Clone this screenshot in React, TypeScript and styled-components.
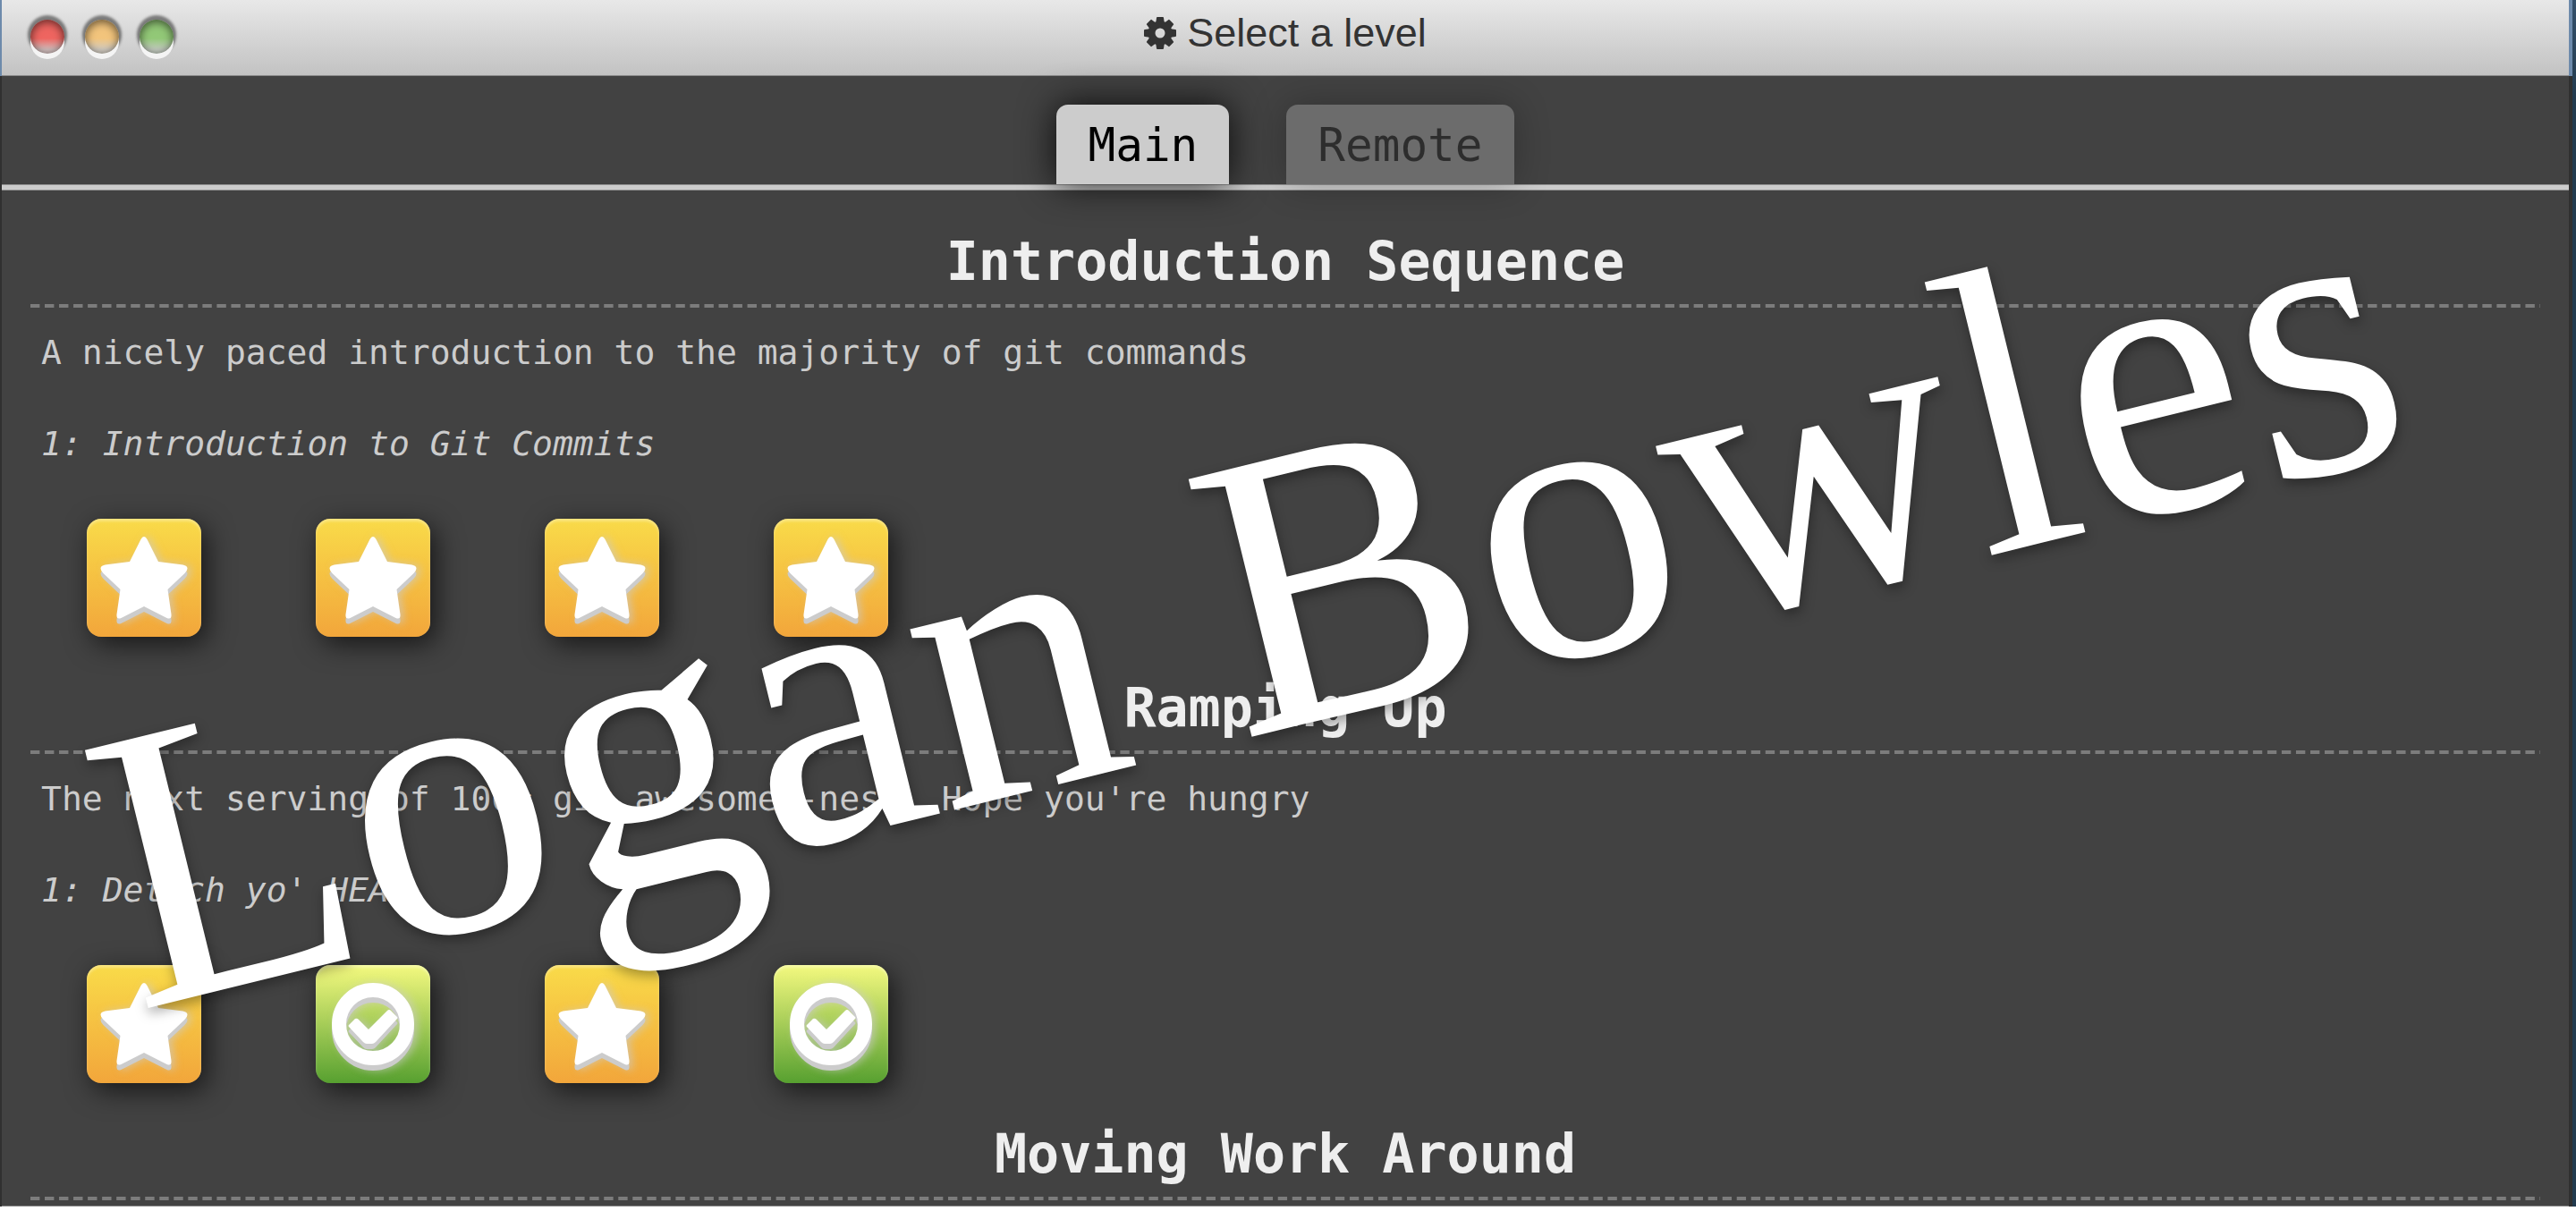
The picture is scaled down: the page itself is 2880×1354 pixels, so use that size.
import React from "react";
import styled, { createGlobalStyle, css } from "styled-components";

const Global = createGlobalStyle`
  *, *::before, *::after { box-sizing: border-box; }
  html { background: #fff; }
  body { margin: 0; overflow: hidden; }
`;

const mono = css`
  font-family: "DejaVu Sans Mono", "Liberation Mono", monospace;
`;

const Desktop = styled.div`
  position: relative;
  padding-right: 4px;
  background: linear-gradient(#34506b, #223a4e 110px, #223a4e);
  overflow: hidden;
`;

const TitleBar = styled.header`
  display: grid;
  grid-template-columns: 1fr auto 1fr;
  align-items: start;
  height: 85px;
  border: solid #6d8aab;
  border-width: 0 4px 0 2px;
  background: linear-gradient(#e8e8e8, #c2c2c2) padding-box;
  box-shadow: inset 0 -1px 0 #8c8c8c;
`;

const Lights = styled.div`
  display: flex;
  gap: 23px;
  padding: 22px 32px 0;
`;

const Light = styled.button<{ $color: string }>`
  width: 38px;
  height: 38px;
  padding: 0;
  border: 0;
  border-radius: 50%;
  background: linear-gradient(transparent 55%, rgba(205, 205, 205, 0.85) 88%), ${(p) => p.$color};
  box-shadow:
    inset 0 2px 10px 1px rgba(0, 0, 0, 0.55),
    0 6px 0 #f4f4f4,
    0 -2px 3px 3px rgba(0, 0, 0, 0.45);
`;

const Title = styled.h1`
  display: flex;
  align-items: center;
  gap: 12px;
  margin: 0;
  font: 400 45px/74px "Liberation Sans", Arial, sans-serif;
  color: #333;
`;

const Body = styled.main`
  ${mono}
  border: solid #303030;
  border-width: 0 4px 0 2px;
  background: #424242 padding-box;
  box-shadow: inset 0 -1px 0 #8c8c8c;
`;

const Tabs = styled.nav`
  display: flex;
  justify-content: center;
  gap: 64px;
  padding-top: 32px;
`;

const Tab = styled.button<{ $active?: boolean }>`
  ${mono}
  position: relative;
  padding: 16px 35px 13px;
  border: 0;
  border-radius: 13px 13px 0 0;
  background: #ccc;
  color: #000;
  font-size: 51px;
  line-height: 60px;
  opacity: ${(p) => (p.$active ? 1 : 0.3)};
  box-shadow: 0 0 40px rgba(0, 0, 0, 0.85);
`;

const Rule = styled.div`
  height: 7px;
  border: solid #939393;
  border-width: 1px 0;
  background: #ccc;
`;

const Levels = styled.div`
  padding: 39px 32px 7px;
`;

const Heading = styled.h2`
  margin: 0;
  padding-bottom: 12px;
  text-align: center;
  font-size: 60px;
  line-height: 80px;
  color: #eee;
  background: linear-gradient(90deg, #7c7c7c 10px, transparent 10px) 0 100% / 16px 4px;
  background-repeat: round no-repeat;
`;

const About = styled.p`
  margin: 20px 0 0 12px;
  font-size: 38px;
  line-height: 60px;
  color: #ccc;
`;

const SeriesName = styled.h3`
  margin: 42px 0 0 12px;
  font-size: 38px;
  font-weight: 400;
  font-style: italic;
  line-height: 60px;
  color: #ccc;
`;

const Tiles = styled.div`
  display: flex;
  gap: 128px;
  padding: 54px 63px 39px;
`;

const Tile = styled.button<{ $solved?: boolean }>`
  display: grid;
  place-items: center;
  width: 128px;
  height: 132px;
  padding: 0;
  border: 0;
  border-radius: 16px;
  background: ${(p) =>
    p.$solved ? "linear-gradient(#f4f97f, #57a030)" : "linear-gradient(#f9db49, #f2a63b)"};
  box-shadow:
    inset 0 3px 3px rgba(255, 255, 255, 0.3),
    6px 8px 30px rgba(0, 0, 0, 0.65);

  svg {
    display: block;
    overflow: visible;
    filter: drop-shadow(0 6px 0 #ccc) drop-shadow(4px 0 4px rgba(204, 204, 204, 0.6));
  }
`;

const Signature = styled.div`
  position: absolute;
  top: 751px;
  left: 153px;
  transform: rotate(-13.8deg);
  transform-origin: 0 379px;
  font: 400 453px/453px "Liberation Serif", "Times New Roman", serif;
  white-space: nowrap;
  color: #fff;
  text-shadow: 0 6px 14px rgba(0, 0, 0, 0.35);
  pointer-events: none;
`;

const Gear = () => (
  <svg width="36" height="36" viewBox="-18 -18 36 36" fill="#333" aria-hidden="true">
    {[0, 45, 90, 135, 180, 225, 270, 315].map((a) => (
      <path key={a} transform={`rotate(${a})`} d="M-5 -10L-4 -17Q-4 -18 -3 -18H3Q4 -18 4 -17L5 -10Z" />
    ))}
    <circle r="9.5" fill="none" stroke="#333" strokeWidth="8" />
  </svg>
);

const Star = () => (
  <svg width="98" height="92" viewBox="0 0 97 92" fill="#fff" aria-hidden="true">
    <path d="M48.5 0Q50.5 0 52 3L64.5 28L92 31.5Q97 32.5 97 35.5Q97 38 94 41L75 59L79 87Q79.500 93 74 91L48.500 78L23 91Q17.500 93 18 87L22 59L3 41Q0 38 0 35.500Q0 32.500 5 31.500L32.500 28L45 3Q46.500 0 48.500 0Z" />
  </svg>
);

const Check = () => (
  <svg width="92" height="92" viewBox="-46 -46 92 92" aria-hidden="true">
    <circle r="38" fill="none" stroke="#fff" strokeWidth="16" />
    <path
      d="M-27 3Q-28 2 -27 1L-20 -6Q-18 -7 -16 -5L-5 6L16 -15Q18 -17 20 -15L27 -8Q28 -7 27 -6L3 20Q1 22 -1 22H-7Q-9 22 -11 20Z"
      fill="#fff"
    />
  </svg>
);

type Group = { title: string; about?: string; series?: string; solved?: boolean[] };

const groups: Group[] = [
  {
    title: "Introduction Sequence",
    about: "A nicely paced introduction to the majority of git commands",
    series: "1: Introduction to Git Commits",
    solved: [false, false, false, false],
  },
  {
    title: "Ramping Up",
    about: "The next serving of 100% git awesomes-ness. Hope you're hungry",
    series: "1: Detach yo' HEAD",
    solved: [false, true, false, true],
  },
  { title: "Moving Work Around" },
];

export default function App() {
  return (
    <Desktop>
      <Global />
      <TitleBar>
        <Lights>
          <Light $color="#ee6560" aria-label="Close" />
          <Light $color="#f2c47c" aria-label="Minimize" />
          <Light $color="#92c877" aria-label="Zoom" />
        </Lights>
        <Title>
          <Gear />
          Select a level
        </Title>
      </TitleBar>
      <Body>
        <Tabs>
          <Tab $active>Main</Tab>
          <Tab>Remote</Tab>
        </Tabs>
        <Rule />
        <Levels>
          {groups.map((g) => (
            <section key={g.title}>
              <Heading>{g.title}</Heading>
              {g.about && <About>{g.about}</About>}
              {g.series && <SeriesName>{g.series}</SeriesName>}
              {g.solved && (
                <Tiles>
                  {g.solved.map((done, i) => (
                    <Tile key={i} $solved={done} aria-label={`Level ${i + 1}`}>
                      {done ? <Check /> : <Star />}
                    </Tile>
                  ))}
                </Tiles>
              )}
            </section>
          ))}
        </Levels>
      </Body>
      <Signature>Logan Bowles</Signature>
    </Desktop>
  );
}
